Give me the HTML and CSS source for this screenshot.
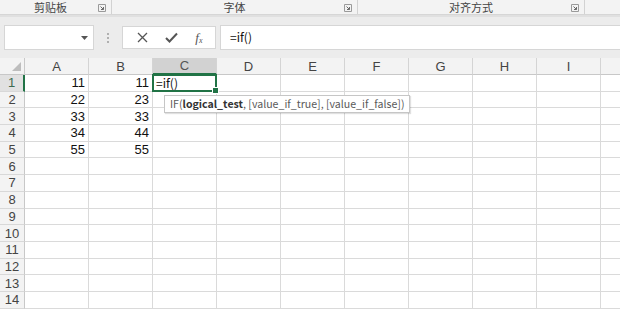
FILE: index.html
```html
<!DOCTYPE html>
<html lang="zh">
<head>
<meta charset="utf-8">
<link rel="stylesheet" href="styles.css">
</head>
<body>
<div class="ribbon">
  <div class="group g1"><span class="glabel">剪贴板</span><span class="launch"><svg width="8" height="8" viewBox="0 0 8 8"><path d="M0.5 0.5H7.5V7.5H0.5Z" fill="none" stroke="#9a9a9a"/><path d="M2.5 2.5L5.5 5.5M5.5 3V5.5H3" fill="none" stroke="#6a6a6a"/></svg></span></div>
  <div class="group g2"><span class="glabel">字体</span><span class="launch"><svg width="8" height="8" viewBox="0 0 8 8"><path d="M0.5 0.5H7.5V7.5H0.5Z" fill="none" stroke="#9a9a9a"/><path d="M2.5 2.5L5.5 5.5M5.5 3V5.5H3" fill="none" stroke="#6a6a6a"/></svg></span></div>
  <div class="group g3"><span class="glabel">对齐方式</span><span class="launch"><svg width="8" height="8" viewBox="0 0 8 8"><path d="M0.5 0.5H7.5V7.5H0.5Z" fill="none" stroke="#9a9a9a"/><path d="M2.5 2.5L5.5 5.5M5.5 3V5.5H3" fill="none" stroke="#6a6a6a"/></svg></span></div>
  <div class="group g4"></div>
</div>
<div class="fbar">
  <div class="namebox"><svg class="dd" width="7" height="4" viewBox="0 0 7 4"><path d="M0 0H7L3.5 4Z" fill="#555"/></svg></div>
  <div class="dots"><i></i><i></i><i></i></div>
  <div class="btns">
    <svg width="11" height="11" viewBox="0 0 11 11"><path d="M1 1L10 10M10 1L1 10" stroke="#555" stroke-width="1.3"/></svg>
    <svg width="13" height="11" viewBox="0 0 13 11"><path d="M1 6L4.5 9.5L12 1.5" fill="none" stroke="#555" stroke-width="2"/></svg>
    <span class="fx">f<sub>x</sub></span>
  </div>
  <div class="finput">=if()</div>
</div>
<div class="sheet">
  <div class="grid">
    <div class="corner"><svg width="9" height="9" viewBox="0 0 9 9"><path d="M9 0V9H0Z" fill="#bdbdbd"/></svg></div>
    <div class="ch">A</div><div class="ch">B</div><div class="ch sel">C</div><div class="ch">D</div><div class="ch">E</div><div class="ch">F</div><div class="ch">G</div><div class="ch">H</div><div class="ch">I</div><div class="ch last"></div>

    <div class="rh sel">1</div><div class="c n">11</div><div class="c n">11</div><div class="c active">=if()</div><div class="c"></div><div class="c"></div><div class="c"></div><div class="c"></div><div class="c"></div><div class="c"></div><div class="c last"></div>
    <div class="rh">2</div><div class="c n">22</div><div class="c n">23</div><div class="c"></div><div class="c"></div><div class="c"></div><div class="c"></div><div class="c"></div><div class="c"></div><div class="c"></div><div class="c last"></div>
    <div class="rh">3</div><div class="c n">33</div><div class="c n">33</div><div class="c"></div><div class="c"></div><div class="c"></div><div class="c"></div><div class="c"></div><div class="c"></div><div class="c"></div><div class="c last"></div>
    <div class="rh">4</div><div class="c n">34</div><div class="c n">44</div><div class="c"></div><div class="c"></div><div class="c"></div><div class="c"></div><div class="c"></div><div class="c"></div><div class="c"></div><div class="c last"></div>
    <div class="rh">5</div><div class="c n">55</div><div class="c n">55</div><div class="c"></div><div class="c"></div><div class="c"></div><div class="c"></div><div class="c"></div><div class="c"></div><div class="c"></div><div class="c last"></div>
    <div class="rh">6</div><div class="c"></div><div class="c"></div><div class="c"></div><div class="c"></div><div class="c"></div><div class="c"></div><div class="c"></div><div class="c"></div><div class="c"></div><div class="c last"></div>
    <div class="rh">7</div><div class="c"></div><div class="c"></div><div class="c"></div><div class="c"></div><div class="c"></div><div class="c"></div><div class="c"></div><div class="c"></div><div class="c"></div><div class="c last"></div>
    <div class="rh">8</div><div class="c"></div><div class="c"></div><div class="c"></div><div class="c"></div><div class="c"></div><div class="c"></div><div class="c"></div><div class="c"></div><div class="c"></div><div class="c last"></div>
    <div class="rh">9</div><div class="c"></div><div class="c"></div><div class="c"></div><div class="c"></div><div class="c"></div><div class="c"></div><div class="c"></div><div class="c"></div><div class="c"></div><div class="c last"></div>
    <div class="rh">10</div><div class="c"></div><div class="c"></div><div class="c"></div><div class="c"></div><div class="c"></div><div class="c"></div><div class="c"></div><div class="c"></div><div class="c"></div><div class="c last"></div>
    <div class="rh">11</div><div class="c"></div><div class="c"></div><div class="c"></div><div class="c"></div><div class="c"></div><div class="c"></div><div class="c"></div><div class="c"></div><div class="c"></div><div class="c last"></div>
    <div class="rh">12</div><div class="c"></div><div class="c"></div><div class="c"></div><div class="c"></div><div class="c"></div><div class="c"></div><div class="c"></div><div class="c"></div><div class="c"></div><div class="c last"></div>
    <div class="rh">13</div><div class="c"></div><div class="c"></div><div class="c"></div><div class="c"></div><div class="c"></div><div class="c"></div><div class="c"></div><div class="c"></div><div class="c"></div><div class="c last"></div>
    <div class="rh">14</div><div class="c"></div><div class="c"></div><div class="c"></div><div class="c"></div><div class="c"></div><div class="c"></div><div class="c"></div><div class="c"></div><div class="c"></div><div class="c last"></div>
  </div>
  <div class="tip">IF(<b>logical_test</b>, [value_if_true], [value_if_false])</div>
</div>
</body>
</html>
```
FILE: styles.css
```css
html, body {
  margin: 0;
  padding: 0;
  width: 620px;
  height: 309px;
  overflow: hidden;
  background: #ffffff;
  font-family: "Noto Sans CJK SC", "Liberation Sans", sans-serif;
}

.ribbon {
  display: flex;
  height: 14px;
  background: #f3f3f3;
  border-bottom: 1px solid #d6d6d6;
}
.group {
  position: relative;
  display: flex;
  align-items: center;
  justify-content: center;
  border-right: 1px solid #d2d2d2;
  height: 14px;
}
.g1 { width: 111px; }
.g2 { width: 245px; }
.g3 { width: 226px; }
.g4 { flex: 1; border-right: none; }
.glabel {
  font-size: 11px;
  color: #444;
  line-height: 14px;
}
.g1 .glabel { margin-right: 10px; }
.launch {
  position: absolute;
  right: 5px;
  top: 4px;
  width: 8px;
  height: 8px;
  display: block;
  line-height: 0;
}

.fbar {
  display: flex;
  align-items: center;
  height: 43px;
  background: #ececec;
  border-top: 2px solid #e0e0e0;
  box-sizing: border-box;
  padding-left: 4px;
}
.namebox {
  width: 88px;
  height: 23px;
  background: #fff;
  border: 1px solid #d6d6d6;
  position: relative;
}
.dd { position: absolute; right: 5px; top: 10px; }
.dots {
  width: 28px;
  display: flex;
  flex-direction: column;
  align-items: center;
  gap: 2px;
}
.dots i {
  display: block;
  width: 2px;
  height: 2px;
  background: #b0b0b0;
}
.btns {
  width: 94px;
  height: 23px;
  background: #fff;
  border: 1px solid #d6d6d6;
  display: flex;
  align-items: center;
  justify-content: space-around;
  padding: 0 4px 0 6px;
  box-sizing: border-box;
}
.fx {
  font-family: "Liberation Serif", serif;
  font-style: italic;
  font-size: 13px;
  color: #555;
  line-height: 1;
}
.fx sub { font-size: 8px; vertical-align: -1px; }
.finput {
  flex: 1;
  margin-left: 4px;
  height: 23px;
  background: #fff;
  border: 1px solid #d6d6d6;
  border-right: none;
  font-family: "Noto Sans CJK SC", sans-serif;
  font-size: 12px;
  line-height: 21px;
  padding-left: 9px;
  color: #111;
}

.sheet {
  position: relative;
  background: #eeeeee;
}
.grid {
  display: grid;
  grid-template-columns: 25px repeat(9, 64px) 19px;
  grid-template-rows: 17px repeat(14, 16.7px);
  background: #fff;
}
.corner, .ch, .rh {
  background: #f3f3f3;
  color: #444;
  font-family: "Liberation Sans", sans-serif;
  font-size: 13px;
  box-sizing: border-box;
}
.corner {
  border-right: 1px solid #c8c8c8;
  border-bottom: 1px solid #c8c8c8;
  display: flex;
  align-items: flex-end;
  justify-content: flex-end;
  padding: 0 3px 3px 0;
}
.ch {
  border-right: 1px solid #d4d4d4;
  border-bottom: 1px solid #c8c8c8;
  display: flex;
  align-items: center;
  justify-content: center;
  line-height: 1;
}
.ch.sel {
  background: #d2d2d2;
  border-bottom: 2px solid #217346;
  color: #555;
}
.ch.last { border-right: none; }
.rh {
  border-right: 1px solid #c8c8c8;
  border-bottom: 1px solid #d8d8d8;
  display: flex;
  align-items: center;
  justify-content: center;
  font-size: 13px;
  line-height: 1;
}
.rh.sel {
  background: #e1e1e1;
  border-right: 2px solid #217346;
  color: #3c6a50;
}
.c {
  border-right: 1px solid #dadada;
  border-bottom: 1px solid #dadada;
  box-sizing: border-box;
  font-family: "Liberation Sans", sans-serif;
  font-size: 13px;
  color: #111;
  display: flex;
  align-items: center;
  padding: 0 3px;
  line-height: 1;
}
.c.last { border-right: none; }
.c.n { justify-content: flex-end; }
.c.active {
  position: relative;
  font-family: "Noto Sans CJK SC", sans-serif;
  font-size: 12px;
  padding-left: 3px;
}
.c.active::after {
  content: "";
  position: absolute;
  left: -1px;
  top: -1px;
  right: -1px;
  bottom: -1px;
  border: 2px solid #217346;
}
.c.active::before {
  content: "";
  position: absolute;
  right: -3px;
  bottom: -3px;
  width: 5px;
  height: 5px;
  background: #217346;
  border: 1px solid #fff;
  z-index: 2;
}
.tip {
  position: absolute;
  left: 164px;
  top: 37px;
  height: 16px;
  padding: 0 5px;
  background: #fff;
  border: 1px solid #c6c6c6;
  box-shadow: 1px 1px 1px rgba(0,0,0,0.12);
  font-family: "Noto Sans CJK SC", sans-serif;
  font-size: 10.6px;
  line-height: 16px;
  color: #5a5a5a;
  white-space: nowrap;
}
.tip b { color: #333; font-weight: bold; }
```
